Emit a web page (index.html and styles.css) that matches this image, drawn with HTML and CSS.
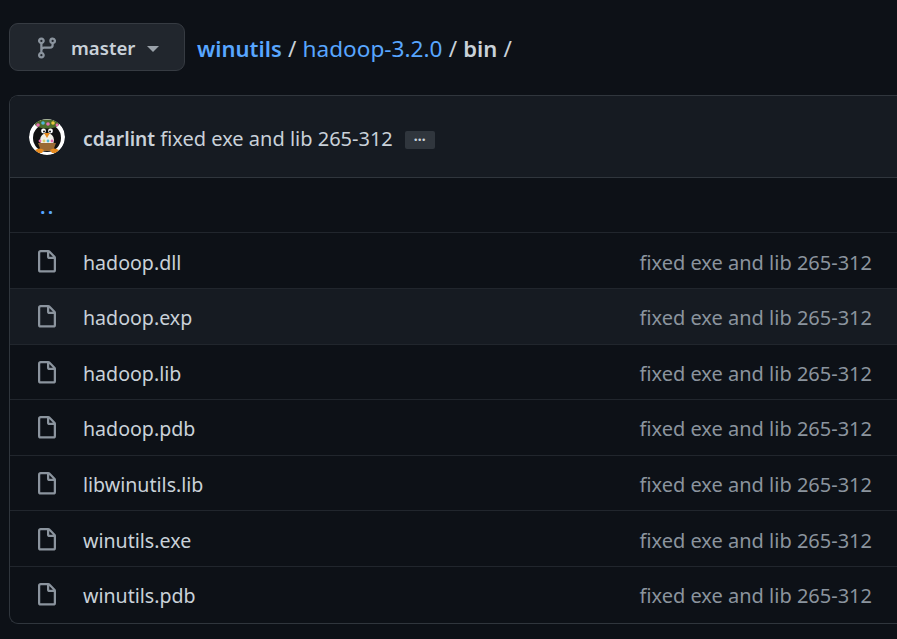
FILE: index.html
```html
<!DOCTYPE html>
<html>
<head>
    <title>winutils/hadoop-3.2.0/bin</title>
    <link rel="stylesheet" href="styles.css">
</head>
<body>
    <svg class="icon-defs">
        <symbol id="file" viewBox="0 0 16 16"><path fill="currentColor" fill-rule="evenodd" d="M3.75 1.5a.25.25 0 00-.25.25v11.5c0 .138.112.25.25.25h8.5a.25.25 0 00.25-.25V6H9.75A1.75 1.75 0 018 4.25V1.5H3.75zm5.75.56v2.19c0 .138.112.25.25.25h2.19L9.5 2.06zM2 1.75C2 .784 2.784 0 3.75 0h5.086c.464 0 .909.184 1.237.513l3.414 3.414c.329.328.513.773.513 1.237v8.086A1.75 1.75 0 0112.25 15h-8.5A1.75 1.75 0 012 13.25V1.75z"/></symbol>
    </svg>

    <div class="path-bar">
        <button class="branch-button">
            <svg class="branch-icon" viewBox="0 0 16 16"><path fill="currentColor" fill-rule="evenodd" d="M11.75 2.5a.75.75 0 100 1.5.75.75 0 000-1.5zm-2.25.75a2.25 2.25 0 113 2.122V6A2.5 2.5 0 0110 8.5H6a1 1 0 00-1 1v1.128a2.251 2.251 0 11-1.5 0V5.372a2.25 2.25 0 111.5 0v1.836A2.492 2.492 0 016 7h4a1 1 0 001-1v-.628A2.25 2.25 0 019.5 3.25zM4.25 12a.75.75 0 100 1.5.75.75 0 000-1.5zM3.5 3.25a.75.75 0 111.5 0 .75.75 0 01-1.5 0z"/></svg>
            <span class="branch-name">master</span>
            <span class="caret"></span>
        </button>
        <div class="crumbs">
            <a class="crumb-root" href="#">winutils</a>
            <span class="sep">/</span>
            <a href="#">hadoop-3.2.0</a>
            <span class="sep">/</span>
            <strong>bin</strong>
            <span class="sep">/</span>
        </div>
    </div>

    <div class="file-box">
        <div class="commit-row">
            <svg class="avatar" viewBox="0 0 36 36">
                <circle cx="18" cy="18" r="18" fill="#fff"/>
                <ellipse cx="18" cy="19" rx="14" ry="14" fill="#111"/>
                <ellipse cx="18" cy="5" rx="12" ry="4.5" fill="#4c6b2c"/>
                <circle cx="9" cy="6" r="1.8" fill="#e66fb0"/>
                <circle cx="14" cy="4" r="1.8" fill="#4fb7d8"/>
                <circle cx="19" cy="5" r="1.8" fill="#e66fb0"/>
                <circle cx="24" cy="4" r="1.8" fill="#e8c93c"/>
                <circle cx="28" cy="6" r="1.4" fill="#e66fb0"/>
                <ellipse cx="18" cy="21" rx="7" ry="7" fill="#f2efe6"/>
                <circle cx="14.5" cy="12" r="2.4" fill="#fff"/>
                <circle cx="21.5" cy="12" r="2.4" fill="#fff"/>
                <circle cx="15" cy="12.5" r="1" fill="#111"/>
                <circle cx="21" cy="12.5" r="1" fill="#111"/>
                <path d="M15 14h6l-3 5z" fill="#e58a1f"/>
                <circle cx="11" cy="22" r="1.4" fill="#e66fb0"/>
                <circle cx="15" cy="22" r="1.4" fill="#d8d06a"/>
                <circle cx="19" cy="22" r="1.4" fill="#4fb7d8"/>
                <circle cx="23" cy="22" r="1.4" fill="#e66fb0"/>
                <path d="M9 24h18l-3 8H12z" fill="#9a6a35"/>
                <path d="M6 31q5-3 9 0l-2 3H9zM30 31q-5-3-9 0l2 3h4z" fill="#e58a1f"/>
            </svg>
            <span class="commit-text"><a class="author" href="#">cdarlint</a> fixed exe and lib 265-312</span>
            <span class="more-button">…</span>
        </div>
        <div class="file-row parent-row"><a href="#">. .</a></div>
        <div class="file-row">
            <svg class="file-icon"><use href="#file"/></svg>
            <a class="file-name" href="#">hadoop.dll</a>
            <span class="file-msg">fixed exe and lib 265-312</span>
        </div>
        <div class="file-row hovered">
            <svg class="file-icon"><use href="#file"/></svg>
            <a class="file-name" href="#">hadoop.exp</a>
            <span class="file-msg">fixed exe and lib 265-312</span>
        </div>
        <div class="file-row">
            <svg class="file-icon"><use href="#file"/></svg>
            <a class="file-name" href="#">hadoop.lib</a>
            <span class="file-msg">fixed exe and lib 265-312</span>
        </div>
        <div class="file-row">
            <svg class="file-icon"><use href="#file"/></svg>
            <a class="file-name" href="#">hadoop.pdb</a>
            <span class="file-msg">fixed exe and lib 265-312</span>
        </div>
        <div class="file-row">
            <svg class="file-icon"><use href="#file"/></svg>
            <a class="file-name" href="#">libwinutils.lib</a>
            <span class="file-msg">fixed exe and lib 265-312</span>
        </div>
        <div class="file-row">
            <svg class="file-icon"><use href="#file"/></svg>
            <a class="file-name" href="#">winutils.exe</a>
            <span class="file-msg">fixed exe and lib 265-312</span>
        </div>
        <div class="file-row">
            <svg class="file-icon"><use href="#file"/></svg>
            <a class="file-name" href="#">winutils.pdb</a>
            <span class="file-msg">fixed exe and lib 265-312</span>
        </div>
    </div>
</body>
</html>
```

FILE: styles.css
```css
body {
    margin: 0;
    padding: 23px 0 0 9px;
    background-color: #0d1117;
    color: #c9d1d9;
    font-family: "Noto Sans", sans-serif;
    font-size: 20px;
}

a {
    color: #58a6ff;
    text-decoration: none;
}

.icon-defs {
    display: none;
}

.path-bar {
    display: flex;
    align-items: center;
    height: 48px;
    margin-bottom: 24px;
}

.branch-button {
    display: flex;
    align-items: center;
    box-sizing: border-box;
    width: 176px;
    height: 48px;
    padding: 0 0 0 25px;
    background-color: #21262d;
    border: 1px solid #363b42;
    border-radius: 9px;
    color: #c9d1d9;
    font-family: inherit;
    font-size: 18.6px;
}

.branch-icon {
    width: 24px;
    height: 24px;
    margin-top: 2px;
    color: #8b949e;
}

.branch-name {
    margin-left: 12px;
    font-weight: 600;
}

.caret {
    margin-left: 12px;
    margin-top: 3px;
    border-top: 6px solid #9aa1a9;
    border-left: 6px solid transparent;
    border-right: 6px solid transparent;
}

.crumbs {
    display: flex;
    gap: 6.2px;
    margin-left: 12px;
    padding-top: 2px;
    font-size: 22.6px;
}

.crumb-root,
.crumbs strong {
    font-size: 22px;
    font-weight: 600;
}

.file-box {
    border: 1px solid #30363d;
    border-right: none;
    border-radius: 9px 0 0 9px;
    overflow: hidden;
}

.commit-row {
    display: flex;
    align-items: center;
    height: 81px;
    padding-left: 19px;
    background-color: #161b22;
    border-bottom: 1px solid #30363d;
}

.avatar {
    width: 36px;
    height: 36px;
    border-radius: 50%;
}

.commit-text {
    margin-left: 18px;
    padding-top: 3px;
}

.author {
    color: #c9d1d9;
    font-size: 19.2px;
    font-weight: 600;
}

.more-button {
    display: flex;
    justify-content: center;
    box-sizing: border-box;
    width: 30px;
    height: 18px;
    margin-left: 12px;
    margin-top: 7px;
    background-color: #30363d;
    border-radius: 2px;
    font-size: 14px;
    font-weight: 700;
    line-height: 10px;
}

.file-row {
    display: flex;
    align-items: center;
    box-sizing: border-box;
    height: 55.6px;
    padding-left: 25px;
    padding-right: 25px;
    border-top: 1px solid #21262d;
}

.file-row:last-child {
    height: 57px;
    padding-bottom: 2px;
}

.parent-row {
    height: 54.4px;
    padding-left: 30px;
    padding-top: 2px;
    border-top: none;
    font-weight: 600;
    word-spacing: -3px;
}

.hovered {
    background-color: #161b22;
}

.file-icon {
    width: 24px;
    height: 24px;
    margin-top: 2px;
    color: #8b949e;
}

.file-name {
    margin-left: 24px;
    padding-top: 3px;
    color: #c9d1d9;
    font-size: 19.6px;
}

.file-msg {
    margin-left: auto;
    padding-top: 3px;
    color: #8b949e;
}
```
